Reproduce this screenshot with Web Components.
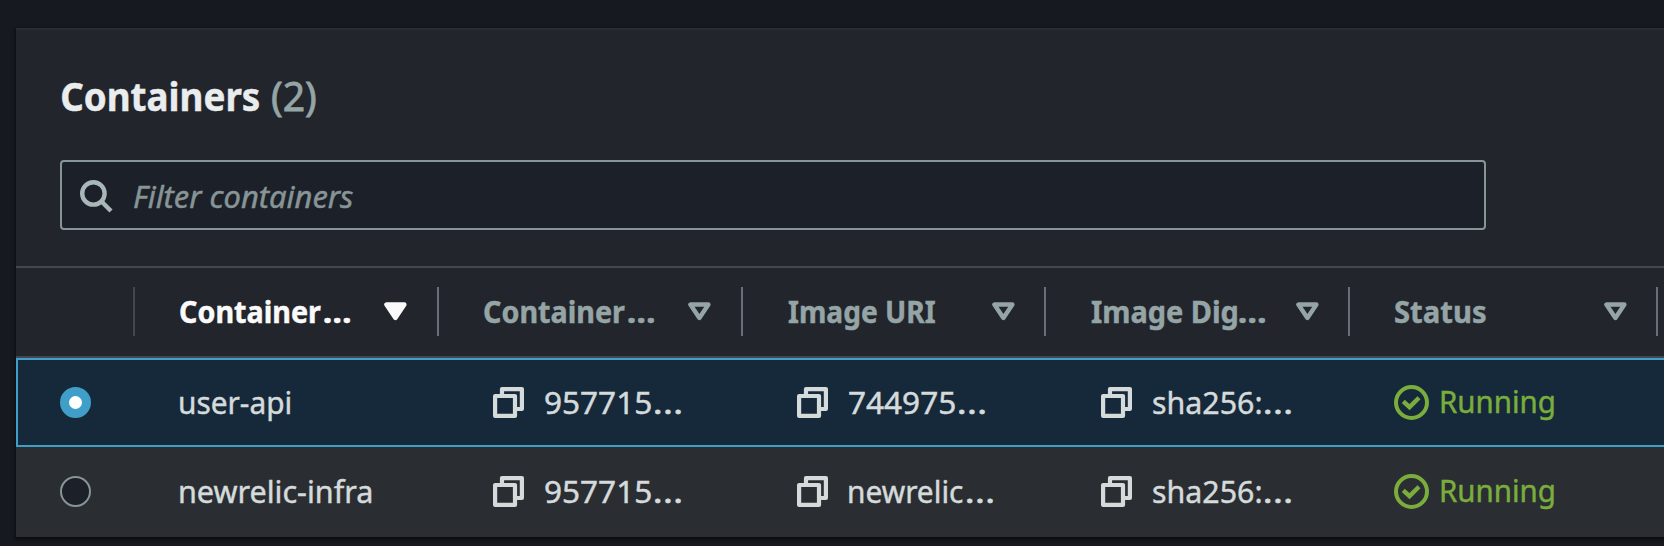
<!DOCTYPE html>
<html lang="en"><head><meta charset="utf-8"><title>Containers</title>
<style>
html,body{margin:0;height:100%;background:#16191f;overflow:hidden}
body{font:30px/40px "Noto Sans","Open Sans",sans-serif;color:#d5dbdb}
</style></head><body>
<containers-panel></containers-panel>
<script>
const define=(name,html,init)=>customElements.define(name,class extends HTMLElement{
  constructor(){super();this.attachShadow({mode:'open'}).innerHTML=html}
  connectedCallback(){init&&init(this,this.shadowRoot)}
});
const measure=document.createElement('canvas').getContext('2d');

/* One line of text condensed or widened so its ink fills the given width.
   A trailing ellipsis is spaced out separately from the text before it. */
define('fit-text',`<style>:host{display:flex;flex:none;white-space:pre;-webkit-text-stroke:.45px currentColor}b{display:block;flex:none;font-weight:inherit}span{display:inline-block;transform-origin:0 50%}</style>`,(el,root)=>{
  const text=el.getAttribute('text'),w=+el.getAttribute('w'),cs=getComputedStyle(el);
  measure.font=`${cs.fontStyle} ${cs.fontWeight} ${cs.fontSize} ${cs.fontFamily}`;
  const add=(t,width)=>{
    const box=document.createElement('b'),span=document.createElement('span');
    span.textContent=t;box.append(span);root.append(box);
    const m=measure.measureText(t),l=m.actualBoundingBoxLeft,s=width/(l+m.actualBoundingBoxRight);
    box.style.width=width+'px';
    span.style.transform=`translateX(${l*s}px) scaleX(${s})`;
    return box;
  };
  if(text.endsWith('…')){
    const gap=+cs.fontWeight>500?2.5:4;
    add(text.slice(0,-1),w-26-gap);
    add('…',26).style.marginLeft=gap+'px';
  }else add(text,w);
  el.style.width=w+'px';
});
define('copy-icon',`<style>:host{display:block;width:31px;height:31px;flex:none}svg{display:block}</style>
<svg width="31" height="31" viewBox="0 0 31 31" fill="none" stroke="#d5dbdb" stroke-width="4.2" stroke-linejoin="round"><path d="M9 8V2.1H28.9V22H23"/><path d="M2.1 9H22V28.9H2.1Z"/></svg>`);
define('search-icon',`<style>:host{display:block;width:33px;height:33px;flex:none}svg{display:block}</style>
<svg width="33" height="33" viewBox="0 0 33 33" fill="none" stroke="#aab7b8" stroke-width="4.4"><circle cx="13.4" cy="13.4" r="11.2"/><path d="M21.3 21.3L31 31"/></svg>`);
define('sort-icon',`<style>:host{display:block;width:23px;height:19px;flex:none;color:#95a5a6}:host([active]){color:#fafafa}svg{display:block}:host([active]) path{fill:currentColor}</style>
<svg width="23" height="19" viewBox="0 0 23 19" fill="none" stroke="currentColor" stroke-width="4.4" stroke-linejoin="round"><path d="M2.4 2.5H20.4L11.4 16Z"/></svg>`);
define('status-badge',`<style>:host{display:flex;align-items:flex-start;gap:10.5px;color:#7aad3c}svg{display:block;flex:none}fit-text{margin-top:-3px}</style>
<svg width="36" height="36" viewBox="0 0 36 36" fill="none" stroke="currentColor" stroke-width="4"><circle cx="17.5" cy="17.5" r="15.5"/><path d="M9.3 16.4L15.5 22.1L25 12.7" stroke-width="4.4"/></svg><fit-text text="Running" w="112.5"></fit-text>`);
define('radio-button',`<style>:host{display:block;box-sizing:border-box;width:31px;height:31px;border-radius:50%;background:#1c2028;border:2px solid #879596}
:host([checked]){background:#fff;border:9px solid #409fc9}</style>`);
define('header-cell',`<style>:host{display:flex;box-sizing:border-box;height:49px;align-items:flex-start;justify-content:space-between;border-right:2px solid #6b6e77;padding:0 var(--arrow-inset,29.5px) 0 44.7px;font-weight:700;color:#95a5a6}
:host([active]){color:#fafafa}:host([first]){border-color:#44474e}fit-text{margin-top:5px}sort-icon{margin-top:15px}</style>`,(el,root)=>{
  if(el.hasAttribute('first'))return;
  root.innerHTML+=`<fit-text text="${el.getAttribute('text')}" w="${el.getAttribute('w')}"></fit-text><sort-icon ${el.hasAttribute('active')?'active':''}></sort-icon>`;
});
define('copy-cell',`<style>:host{display:flex;align-items:flex-start;gap:21px;padding-left:54px}copy-icon{margin-top:2px}fit-text{margin-top:-2px}</style>`,(el,root)=>{
  root.innerHTML+=`<copy-icon></copy-icon><fit-text text="${el.getAttribute('text')}" w="${el.getAttribute('w')}"></fit-text>`;
});
define('table-row',`<style>:host{display:grid;box-sizing:border-box;grid-template-columns:119px 304px 304px 304px 303px 1fr;height:90px;padding-top:27px;background:#2a2e33}
:host([selected]){height:89px;background:#16293a;box-shadow:inset 0 2px #409fc9,inset 2px 0 #409fc9,inset 0 -2px #409fc9}</style><slot></slot>`);
define('filter-input',`<style>:host{display:flex;box-sizing:border-box;width:1426px;height:70px;border:2px solid #879596;border-radius:4px;background:#1c2028;padding:18px 18px 0;gap:20.5px;color:#879596;font-style:italic}fit-text{margin-top:-3.5px}</style>
<search-icon></search-icon><fit-text text="Filter containers" w="219.5"></fit-text>`);
define('containers-panel',`<style>
:host{display:block;box-sizing:border-box;margin-left:16px;padding-top:28px;width:1664px}
main{background:#22252c;box-shadow:0 2px 3px 1px rgba(0,0,0,.5)}
header{box-sizing:border-box;height:240px;border-top:2px solid #2a2e33;border-bottom:2px solid #44474e;padding:41px 0 0 44px}
h2{display:flex;gap:13px;margin:0 0 39px 1.7px;font-size:39.5px;line-height:50px;font-weight:700;color:#eaeded}
.n{font-weight:400;color:#95a5a6;-webkit-text-stroke-width:.8px}
.head{display:grid;grid-template-columns:119px 304px 304px 303px 304px 308px;box-sizing:border-box;height:90px;padding-top:19px;border-bottom:2px solid #44474e}
.wide{--arrow-inset:30.5px}
radio-button{margin:2px 0 0 44px}.name{margin:-2px 0 0 45.3px}status-badge{margin-left:44px}
</style>
<main><header><h2><fit-text text="Containers" w="197.5"></fit-text><fit-text class="n" text="(2)" w="44"></fit-text></h2><filter-input></filter-input></header>
<div class="head"><header-cell first></header-cell><header-cell class="wide" active text="Container…" w="170"></header-cell><header-cell class="wide" text="Container…" w="170"></header-cell><header-cell text="Image URI" w="147"></header-cell><header-cell text="Image Dig…" w="174.5"></header-cell><header-cell text="Status" w="90.5"></header-cell></div>
<table-row selected><radio-button checked></radio-button><fit-text class="name" text="user-api" w="110.5"></fit-text><copy-cell text="957715…" w="136"></copy-cell><copy-cell text="744975…" w="136"></copy-cell><copy-cell text="sha256:…" w="137.5"></copy-cell><status-badge></status-badge></table-row>
<table-row><radio-button></radio-button><fit-text class="name" text="newrelic-infra" w="191.5"></fit-text><copy-cell text="957715…" w="136"></copy-cell><copy-cell text="newrelic…" w="144"></copy-cell><copy-cell text="sha256:…" w="137.5"></copy-cell><status-badge></status-badge></table-row>
</main>`);
</script></body></html>
